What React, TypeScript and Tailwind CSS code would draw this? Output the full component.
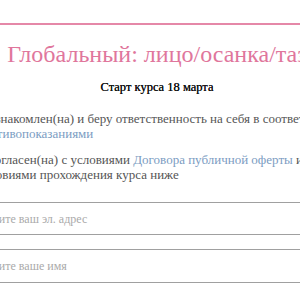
import React from "react";

const serif = { fontFamily: '"Liberation Serif", "DejaVu Serif", serif' };

export default function App() {
  return (
    <div className="w-[300px] h-[300px] overflow-hidden bg-white" style={serif}>
      <div className="h-[23px]" />
      <div className="border-t-2 border-[#e588a8]" />
      <div className="ml-[-40px] w-[394px]">
        <h1 className="mt-[14px] text-center text-[24px] leading-[30px] text-[#e0769c] whitespace-nowrap">
          Глобальный: лицо/осанка/таз
        </h1>
        <p className="mt-[10px] text-center text-[12.5px] leading-[16px] text-[#111] [text-shadow:0_0_0.4px_#111]">
          Старт курса 18 марта
        </p>
        <div className="mt-[16px] pl-[17px] text-[13px] leading-[15px] text-[#555]">
          <p>
            Я ознакомлен(на) и беру ответственность на себя в соответствии с{" "}
            <span className="text-[#7b9cc2]">противопоказаниями</span>
          </p>
          <p className="mt-[11px]">
            Я согласен(на) с условиями{" "}
            <span className="text-[#7b9cc2]">Договора публичной оферты</span> и
            условиями прохождения курса ниже
          </p>
        </div>
        <div className="mt-[20px] flex flex-col gap-[14px]">
          <div className="h-[33px] border-y border-[#a0a0a0] flex items-center pl-[14px] text-[12px] text-[#aaa]">
            Введите ваш эл. адрес
          </div>
          <div className="h-[34px] border-y border-[#a0a0a0] flex items-center pl-[14px] text-[12px] text-[#aaa]">
            Введите ваше имя
          </div>
        </div>
      </div>
    </div>
  );
}
